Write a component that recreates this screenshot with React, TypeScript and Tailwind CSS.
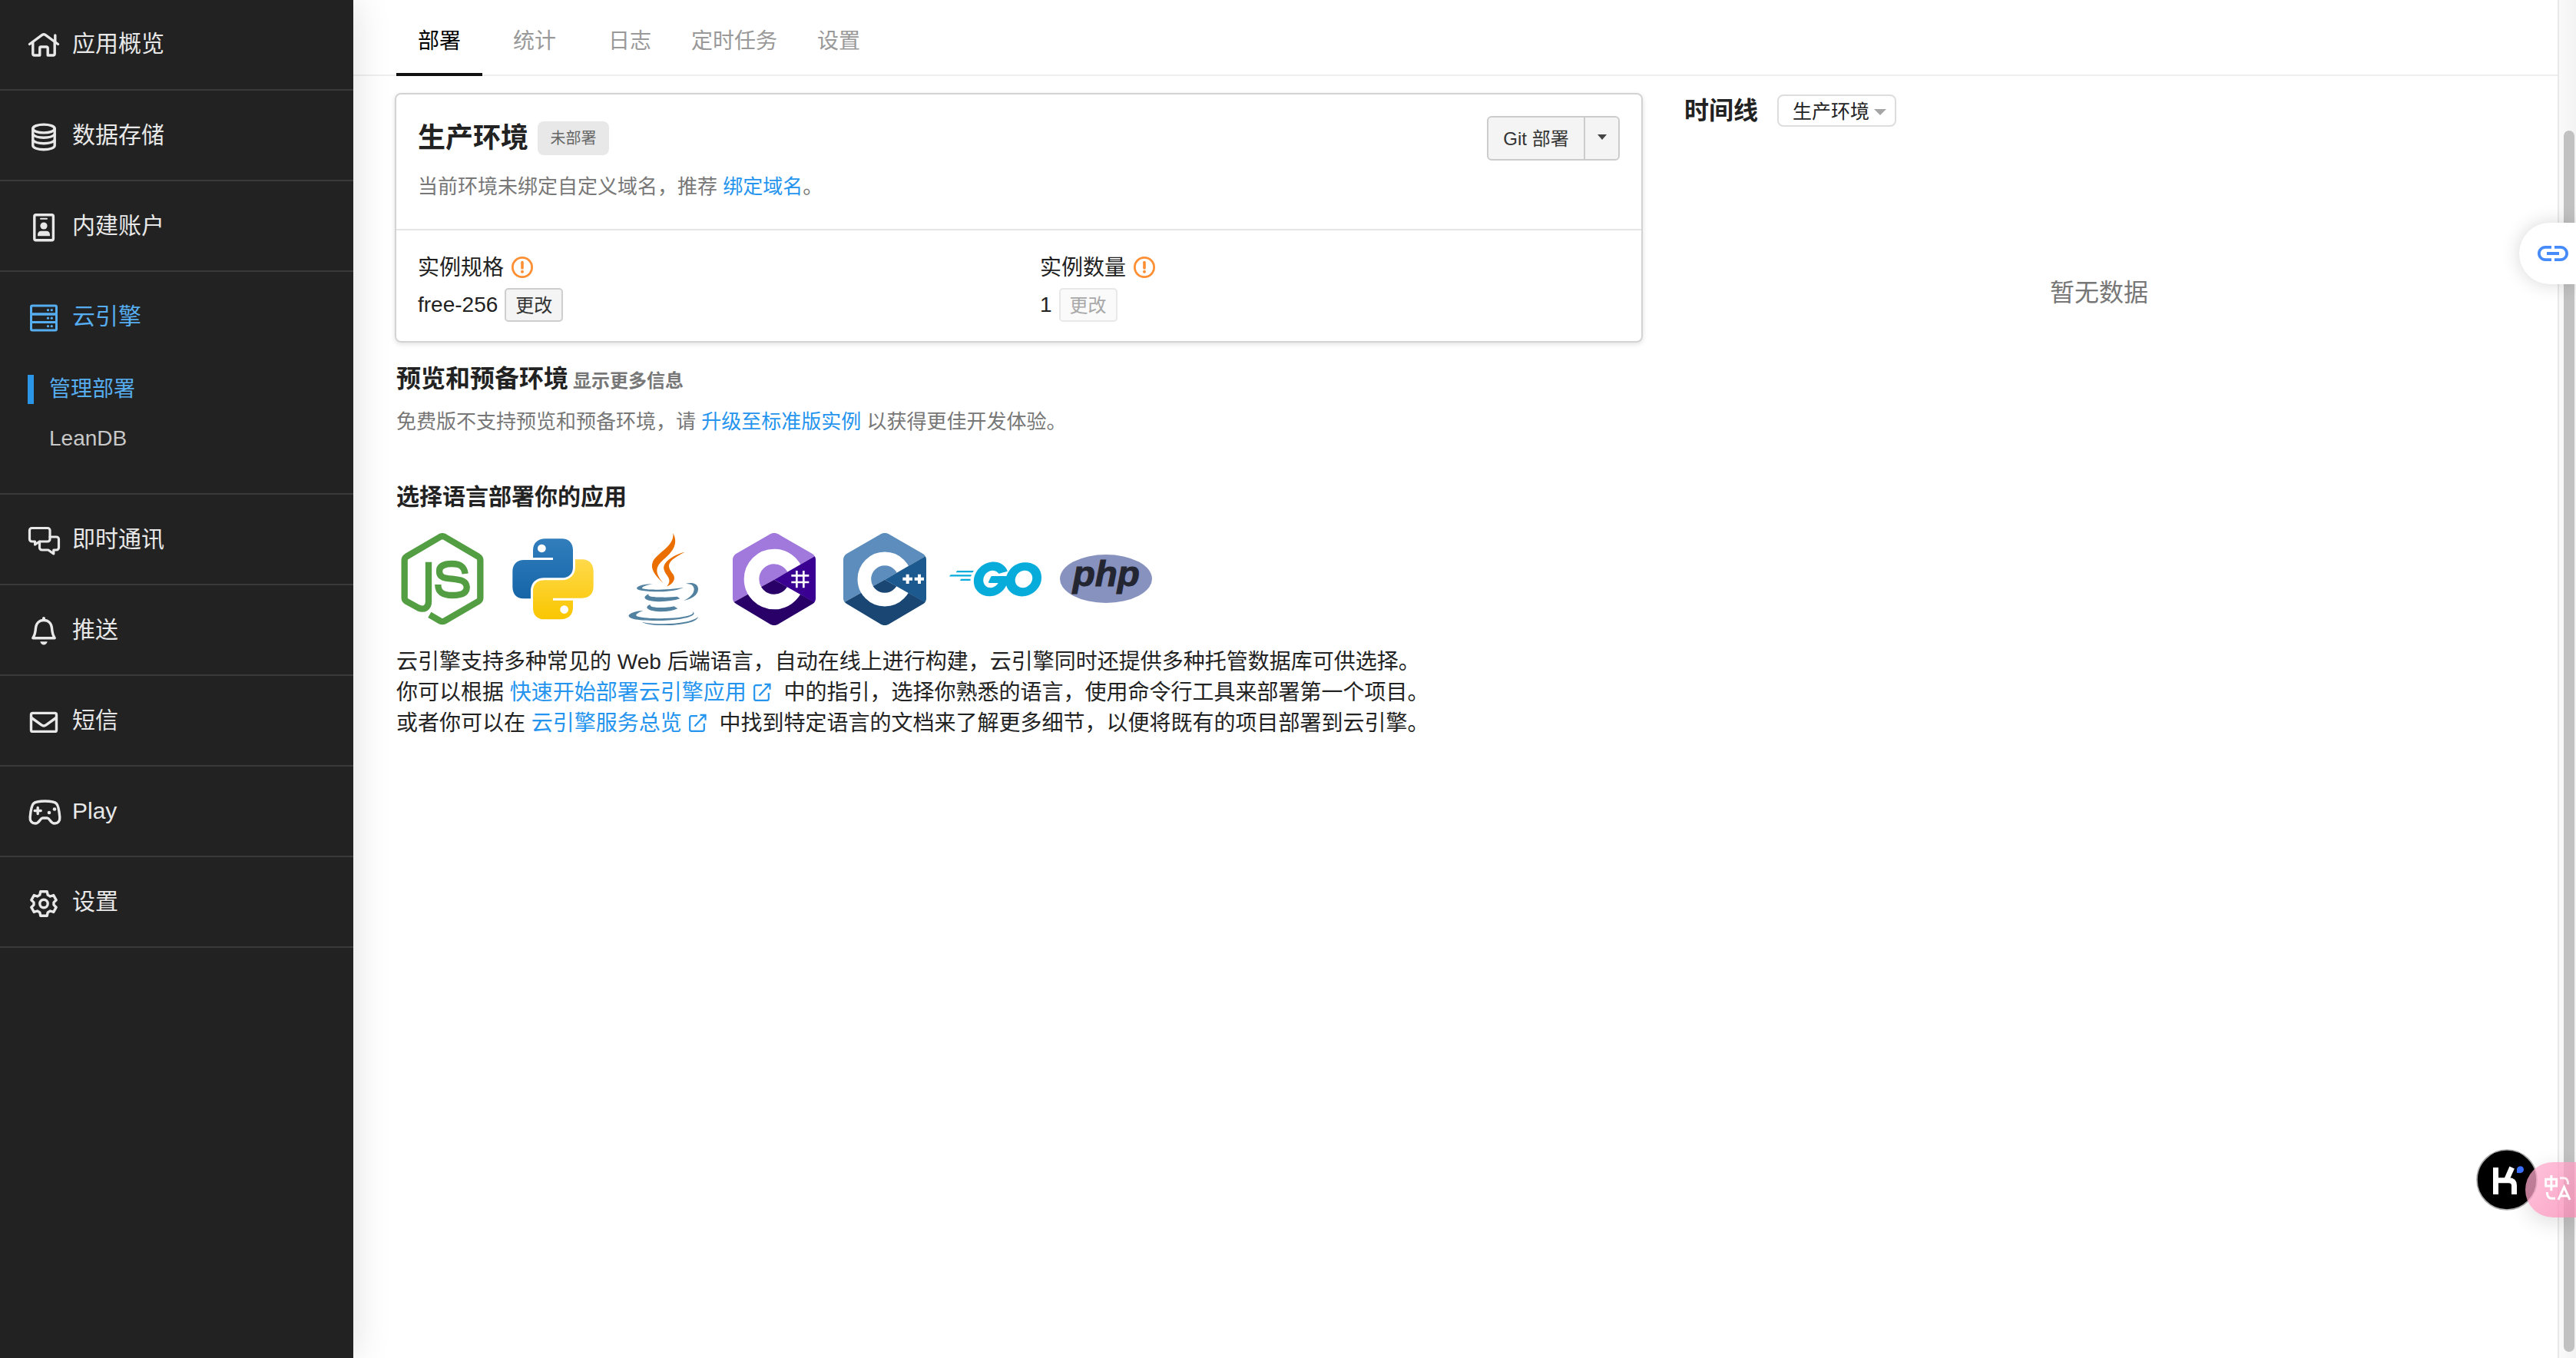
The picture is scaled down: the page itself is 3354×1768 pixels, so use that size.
import type { ReactNode } from 'react';
import { MdLink } from 'react-icons/md';
import { SiGo } from 'react-icons/si';

const stroke = {
  fill: 'none',
  stroke: 'currentColor',
  strokeWidth: 3.4,
  strokeLinecap: 'round' as const,
  strokeLinejoin: 'round' as const,
};

function NavIcon({ children }: { children: ReactNode }) {
  return (
    <svg viewBox="0 0 48 40" className="h-10 w-12 shrink-0">
      {children}
    </svg>
  );
}

const HomeIcon = () => (
  <NavIcon>
    <g {...stroke}>
      <path d="M5.5 18.5 22 6.4a3.4 3.4 0 0 1 4 0L42.5 18.5" />
      <path d="M38.8 7v8" />
      <path d="M9.8 16v15a2 2 0 0 0 2 2h7v-9.5a1.5 1.5 0 0 1 1.5-1.5h7.400a1.5 1.5 0 0 1 1.5 1.5V33h7a2 2 0 0 0 2-2V16" />
    </g>
  </NavIcon>
);

const DatabaseIcon = () => (
  <NavIcon>
    <g {...stroke}>
      <ellipse cx="24" cy="9.5" rx="14.2" ry="5.4" />
      <path d="M9.8 9.5v22c0 3 6.4 5.2 14.2 5.2s14.2-2.2 14.2-5.200v-22" />
      <path d="M9.8 17c2.5 3 8 4.2 14.2 4.2S35.7 20 38.2 17M9.8 24.5c2.5 3 8 4.2 14.2 4.2s11.7-1.2 14.2-4.200" />
    </g>
  </NavIcon>
);

const AccountIcon = () => (
  <NavIcon>
    <rect x="11.8" y="3.7" width="24.6" height="33" rx="2" {...stroke} />
    <path d="M20 8.7h8" {...stroke} strokeWidth={2} />
    <circle cx="24" cy="18" r="4.6" fill="currentColor" />
    <path d="M16 31.2v-1.400c0-3.2 2-5 4.5-5h7c2.500 0 4.5 1.8 4.5 5v1.400z" fill="currentColor" />
  </NavIcon>
);

const ServerIcon = () => (
  <NavIcon>
    <g {...stroke} strokeWidth={3}>
      <rect x="7.5" y="4" width="33" height="11" rx="1.5" />
      <rect x="7.5" y="15" width="33" height="10.5" rx="1.5" />
      <rect x="7.5" y="25.5" width="33" height="10.5" rx="1.5" />
    </g>
    <g fill="currentColor">
      <circle cx="29.5" cy="9.7" r="1.6" />
      <circle cx="34.3" cy="9.7" r="1.6" />
      <circle cx="29.5" cy="20.2" r="1.6" />
      <circle cx="34.3" cy="20.2" r="1.6" />
      <circle cx="29.5" cy="30.7" r="1.6" />
      <circle cx="34.3" cy="30.7" r="1.6" />
    </g>
  </NavIcon>
);

const ChatIcon = () => (
  <NavIcon>
    <g {...stroke} strokeWidth={3.2}>
      <path d="M18.5 21 12.6 25v-4H8.5a3 3 0 0 1-3-3V6.500a3 3 0 0 1 3-3H29a3 3 0 0 1 3 3V18a3 3 0 0 1-3 3z" />
      <path d="M32 15h8.5a3 3 0 0 1 3 3v11a3 3 0 0 1-3 3h-3.700v5l-7-5H21.500a3 3 0 0 1-3-3v-8" />
    </g>
  </NavIcon>
);

const BellIcon = () => (
  <NavIcon>
    <path d="M24 5.5c-6.2 0-10 4.2-10.5 10.2C13 22.5 12 25.5 9.8 28.7h28.4C36 25.5 35 22.5 34.5 15.7 34 9.7 30.2 5.5 24 5.5z" {...stroke} />
    <path d="M24 3v2" {...stroke} strokeWidth={4} />
    <path d="M19.3 33.2h9.400c-.6 2.7-2.3 4.2-4.700 4.2s-4.1-1.5-4.700-4.200z" fill="currentColor" />
  </NavIcon>
);

const MailIcon = () => (
  <NavIcon>
    <rect x="7.5" y="8.4" width="33" height="24" rx="2" {...stroke} />
    <path d="m8 14.5 12.7 9.2a5.6 5.6 0 0 0 6.6 0L40 14.5" {...stroke} />
  </NavIcon>
);

const PlayIcon = () => (
  <NavIcon>
    <g {...stroke}>
      <path d="M10.5 8.2C13 5.6 20 5 25.5 5s12.5.6 15 3.200c2 2 3.6 9.8 4.3 17.600.5 5-2.500 8.2-6.800 8.200-5.500 0-6-7-9.500-7h-6c-3.500 0-4 7-9.500 7-4.300 0-7.300-3.200-6.800-8.200C6.9 18 8.5 10.2 10.5 8.2z" />
      <path d="M16.2 13.5v8M12.2 17.5h8" />
    </g>
    <circle cx="31" cy="20" r="2.3" fill="currentColor" />
    <circle cx="38" cy="15.5" r="2.3" fill="currentColor" />
  </NavIcon>
);

const GearIcon = () => (
  <NavIcon>
    <g {...stroke}>
      <path d="M19.8 4.7h8.4l1 4.4 3.2 1.9 4.3-1.4 3.5 6.2-3.2 3.1v3.2l3.2 3.1-3.5 6.2-4.3-1.400-3.2 1.9-1 4.4h-8.400l-1-4.400-3.200-1.900-4.300 1.400-3.500-6.200 3.200-3.100v-3.200l-3.200-3.100 3.500-6.200 4.300 1.400 3.200-1.900z" />
      <circle cx="24" cy="20.5" r="5.2" />
    </g>
  </NavIcon>
);

function NavItem({ icon, label, active, first }: { icon: ReactNode; label: string; active?: boolean; first?: boolean }) {
  return (
    <div
      className={`flex h-[116px] items-center gap-[13px] pl-[33px] text-[30px] ${first ? 'pb-[3px]' : ''} ${active ? 'text-[#56adf0]' : 'text-[#e8e8e8]'}`}
    >
      <span className="pt-1">{icon}</span>
      <span className="leading-[44px]">{label}</span>
    </div>
  );
}

const Divider = () => <div className="h-0.5 bg-[#3a3a3a]" />;

function Sidebar() {
  return (
    <aside className="relative z-10 flex w-[460px] shrink-0 flex-col bg-[#222222] shadow-[0_0_48px_rgba(0,0,0,0.13)]">
      <NavItem first icon={<HomeIcon />} label="应用概览" />
      <Divider />
      <NavItem icon={<DatabaseIcon />} label="数据存储" />
      <Divider />
      <NavItem icon={<AccountIcon />} label="内建账户" />
      <Divider />
      <div className="h-[288px]">
        <NavItem active icon={<ServerIcon />} label="云引擎" />
        <div className="flex h-[73px] items-center pl-9 text-[28px] text-[#56adf0]">
          <span className="mr-5 h-[38px] w-2 bg-[#2b96e8]" />
          管理部署
        </div>
        <div className="flex h-14 items-center pl-16 text-[28px] text-[#c8c8c8]">LeanDB</div>
      </div>
      <Divider />
      <NavItem icon={<ChatIcon />} label="即时通讯" />
      <Divider />
      <NavItem icon={<BellIcon />} label="推送" />
      <Divider />
      <NavItem icon={<MailIcon />} label="短信" />
      <Divider />
      <NavItem icon={<PlayIcon />} label="Play" />
      <Divider />
      <NavItem icon={<GearIcon />} label="设置" />
      <Divider />
    </aside>
  );
}

function Tabs() {
  return (
    <nav className="flex h-[99px] items-stretch border-b-2 border-[#eeeeee] pl-14 text-[28px] text-[#999999]">
      <div className="-mb-0.5 flex items-center border-b-4 border-[#111111] px-7 pt-[13px] text-black">部署</div>
      <div className="ml-10 flex items-center pt-[11px]">统计</div>
      <div className="ml-[68px] flex items-center pt-[11px]">日志</div>
      <div className="ml-[52px] flex items-center pt-[11px]">定时任务</div>
      <div className="ml-[52px] flex items-center pt-[11px]">设置</div>
    </nav>
  );
}

const WarnIcon = () => (
  <svg viewBox="0 0 28 28" className="h-7 w-7">
    <circle cx="14" cy="14" r="12.6" fill="none" stroke="#ff8f34" strokeWidth="2.8" />
    <path d="M14 7.5v7.5" stroke="#ff8f34" strokeWidth="3.6" strokeLinecap="round" />
    <circle cx="14" cy="19.8" r="2" fill="#ff8f34" />
  </svg>
);

function Spec({ title, value, disabled }: { title: string; value: string; disabled?: boolean }) {
  return (
    <div className="flex w-[810px] shrink-0 flex-col">
      <div className="flex h-11 items-center gap-2.5">
        <span className="pt-0.5">{title}</span>
        <WarnIcon />
      </div>
      <div className="mt-[5px] flex h-11 items-center gap-[9px]">
        <span>{value}</span>
        <button
          className={`h-11 rounded-[5px] border-2 px-3 pt-px text-2xl leading-[38px] ${disabled ? 'border-[#e8e8e8] bg-[#fafafa] text-[#a8a8a8]' : 'border-[#cecece] bg-[#f4f4f4] text-[#333333]'}`}
        >
          更改
        </button>
      </div>
    </div>
  );
}

function EnvironmentCard() {
  return (
    <section className="h-[325px] rounded-lg border-2 border-[#d3d3d3] shadow-[0_2px_6px_rgba(0,0,0,0.12)]">
      <div className="flex h-[177px] items-start justify-between border-b-2 border-[#e6e6e6] px-7 pt-7">
        <div>
          <div className="mt-[7px] flex h-11 items-center gap-3">
            <h1 className="text-[36px] font-bold leading-[44px]">生产环境</h1>
            <span className="h-11 w-[93px] rounded-lg bg-[#e8e8e8] text-center text-[20px] leading-[44px] text-[#666666]">未部署</span>
          </div>
          <p className="mt-[19px] text-[26px] leading-[44px] text-[#777777]">
            当前环境未绑定自定义域名，推荐 <a className="text-[#2494ee]">绑定域名</a>。
          </p>
        </div>
        <div className="flex h-[58px] rounded-[6px] border-2 border-[#cccccc] bg-[#f4f4f4] text-2xl text-[#333333]">
          <div className="flex w-[124px] items-center justify-center pt-0.5">Git 部署</div>
          <div className="flex w-[45px] items-center justify-center border-l-2 border-[#cccccc]">
            <svg viewBox="0 0 12 7" className="mb-1 h-[7px] w-3">
              <path d="M0 0h12L6 7z" fill="#444444" />
            </svg>
          </div>
        </div>
      </div>
      <div className="flex pl-7 pt-[26px] text-[28px]">
        <Spec title="实例规格" value="free-256" />
        <Spec title="实例数量" value="1" disabled />
      </div>
    </section>
  );
}

const NodeLogo = () => (
  <svg viewBox="48 72 360 360" className="size-[120px]">
    <g fill="none" stroke="#539e43" strokeWidth="25">
      <path d="M174 185V340C174 364 156 374 134 364L88 339Q80 334 80 325V178Q80 169 88 164L219 87Q228 82 237 87L368 164Q376 169 376 178V325Q376 334 368 339L237 415Q228 420 219 415L178 391" />
      <path d="M317 231C313 201 296 192 266 192C234 192 216 200 216 221C216 246 236 248 266 251C304 255 323 260 323 284C323 308 300 315 267 315C230 315 211 304 211 273" />
    </g>
  </svg>
);

const pythonHalf =
  'M582 168V140C582 110 602 94 630 94H694C722 94 738 112 738 138V206C738 232 720 247 694 247H625C594 247 573 268 573 298V328H545C518 328 502 310 502 282V222C502 194 520 177 546 177H660V168ZM616 116a16 16 0 1 0 .1 0z';

const PythonLogo = () => (
  <svg viewBox="480 72 360 360" className="size-[120px]">
    <defs>
      <linearGradient id="pyBlue" x1="0" y1="0" x2="0" y2="1">
        <stop offset="0" stopColor="#327ebd" />
        <stop offset="1" stopColor="#1565a7" />
      </linearGradient>
      <linearGradient id="pyYellow" x1="0" y1="1" x2="0" y2="0">
        <stop offset="0" stopColor="#ffda4b" />
        <stop offset="1" stopColor="#f9c600" />
      </linearGradient>
    </defs>
    <path d={pythonHalf} fill="url(#pyBlue)" fillRule="evenodd" />
    <path d={pythonHalf} fill="url(#pyYellow)" fillRule="evenodd" transform="rotate(180 660 251.5)" />
  </svg>
);

const JavaLogo = () => (
  <svg viewBox="912 72 360 360" className="size-[120px]">
    <g fill="#ea6f00">
      <path d="M1129 72C1150 112 1130 142 1096 172C1066 198 1050 220 1091 268C1060 240 1038 212 1050 184C1064 150 1136 124 1129 72Z" />
      <path d="M1175 146C1130 170 1108 184 1114 208C1119 226 1134 232 1134 248C1133 262 1122 272 1105 281C1118 264 1117 254 1106 238C1094 220 1086 206 1100 188C1114 170 1142 154 1175 146Z" />
    </g>
    <g fill="#5382a1">
      <path d="M1050 270C1020 276 1002 284 1010 289C1030 296 1120 294 1170 284C1150 294 1120 300 1076 301C1020 301 986 296 987 287C988 278 1020 271 1050 270Z" />
      <path d="M1178 270C1204 262 1228 270 1227 292C1226 314 1204 330 1170 336C1196 324 1211 308 1211 291C1210 274 1196 270 1178 270Z" />
      <path d="M1034 310C1026 322 1060 323 1096 323C1118 322 1134 321 1145 320L1156 328C1130 337 1096 341 1060 339C1020 336 1004 324 1034 310Z" />
      <path d="M1040 351C1036 362 1066 364 1096 363C1114 362 1126 360 1132 358L1147 367C1126 376 1096 381 1066 378C1026 374 1016 360 1040 351Z" />
      <path d="M1012 376C988 384 976 394 992 398C1020 406 1096 408 1150 402C1190 398 1214 388 1206 379C1222 390 1196 402 1160 407C1100 417 1010 415 976 408C948 401 950 390 974 382C988 377 1000 376 1012 376Z" />
      <path d="M1008 420C1070 432 1190 430 1227 400C1222 420 1170 431 1100 433C1060 433 1020 428 1008 420Z" />
    </g>
  </svg>
);

function HexC({ id, light, dark, side, r, w, children }: { id: string; light: string; dark: string; side: string; r: number; w: number; children: ReactNode }) {
  return (
    <svg viewBox="276 72 360 360" className="size-[120px]">
      <clipPath id={id}>
        <path d="M442 75Q456 68 470 75L604 152Q618 161 618 175V328Q618 342 606 349L470 429Q456 436 442 429L308 349Q294 341 294 328V175Q294 161 308 152Z" />
      </clipPath>
      <g clipPath={`url(#${id})`}>
        <path d="M276 72H636V150L456 254 276 354Z" fill={light} />
        <path d="M276 354 456 254 636 354V440H276Z" fill={dark} />
        <circle cx="456" cy="252" r={r} fill="none" stroke="#ffffff" strokeWidth={w} />
        <path d="M456 254 636 150V356Z" fill={side} />
      </g>
      {children}
    </svg>
  );
}

const CSharpLogo = () => (
  <HexC id="csHex" light="#a179dc" dark="#280068" side="#390091" r={88.5} w={59}>
    <path d="M544 219V286M571 219V286M523 238H592M523 264H592" stroke="#ffffff" strokeWidth="8" />
  </HexC>
);

const CppLogo = () => (
  <HexC id="cppHex" light="#5c8dbc" dark="#1a4674" side="#1b598e" r={80} w={53}>
    <path d="M545 233V270M526 251.5H564M591 233V270M572 251.5H609" stroke="#ffffff" strokeWidth="12" />
  </HexC>
);

const PhpLogo = () => (
  <svg viewBox="1140 72 360 360" className="size-[120px]">
    <ellipse cx="1320" cy="250.5" rx="180" ry="94.5" fill="#8892bf" />
    <text
      x="1190"
      y="279"
      fontFamily="Liberation Sans"
      fontWeight="700"
      fontStyle="italic"
      fontSize="136"
      textLength="262"
      lengthAdjust="spacingAndGlyphs"
      fill="#232531"
      stroke="#232531"
      strokeWidth="3"
    >
      php
    </text>
  </svg>
);

const ExternalIcon = () => (
  <svg viewBox="0 0 24 24" className="ml-2 mr-[9px] inline-block size-6 align-[-2px]" fill="none" stroke="currentColor" strokeWidth="2.2">
    <path d="M12 3.2H4.200a2 2 0 0 0-2 2v15.600a2 2 0 0 0 2 2h14.600a2 2 0 0 0 2-2V13" />
    <path d="M8.500 16.500 21.500 2.500M15.500 1.800h7v7" />
  </svg>
);

function FloatingTools() {
  return (
    <>
      <div className="absolute right-0 top-[290px] z-20 flex h-20 w-[74px] items-center rounded-l-full bg-white pl-5 text-[#468bf9] shadow-[0_0_24px_rgba(0,0,0,0.16)]">
        <MdLink className="size-12 shrink-0" />
      </div>
      <svg viewBox="72 108 240 240" className="absolute left-[3224px] top-[1496px] z-20 size-20">
        <circle cx="192" cy="228" r="117" fill="#000000" stroke="#a8a8a8" strokeWidth="5" />
        <g fill="none" stroke="#ffffff" strokeWidth="21">
          <path d="M148.500 180V285" />
          <path d="M150 230.500H198Q220 230 220.500 250V285" />
          <path d="M212 180 190 230" />
        </g>
        <path d="M231 201V189a13.500 13.500 0 1 1 13.500 12.500z" fill="#3a70ff" />
      </svg>
      <div className="absolute right-0 top-[1513px] z-20 h-[72px] w-[66px] rounded-l-full bg-linear-to-br from-[#ffb0d0]/75 to-[#f888b2]/75 shadow-[0_8px_28px_rgba(0,0,0,0.12)]">
        <svg viewBox="264 159 198 216" className="h-[72px] w-[66px]" fill="none" stroke="#ffffff" strokeWidth="9">
          <path d="M344 226H386V252H344ZM365.500 210V271" />
          <path d="M399 221H416Q431 222 431 246" opacity="0.8" />
          <path d="M349 276Q349 301 368 301H381" />
          <path d="M393 306 415.500 256 438 306M400 291H431" />
        </svg>
      </div>
    </>
  );
}

export default function App() {
  return (
    <div className="relative flex h-[1768px] w-[3354px] overflow-hidden bg-white font-['Liberation_Sans','Noto_Sans_CJK_SC',sans-serif] text-[#222222]">
      <Sidebar />
      <main className="flex flex-1 flex-col">
        <Tabs />
        <div className="flex pl-[54px] pt-[22px]">
          <div className="w-[1625px]">
            <EnvironmentCard />
            <div className="pl-0.5">
              <div className="mt-[25px] flex h-11 items-baseline text-[32px] font-bold leading-[44px]">
                预览和预备环境
                <span className="ml-1.5 text-2xl text-[#777777]">显示更多信息</span>
              </div>
              <p className="mt-3 text-[26px] leading-[44px] text-[#777777]">
                免费版不支持预览和预备环境，请 <a className="text-[#2494ee]">升级至标准版实例</a> 以获得更佳开发体验。
              </p>
              <h2 className="mt-[54px] text-[30px] font-bold leading-[44px]">选择语言部署你的应用</h2>
              <div className="mt-[25px] flex h-[120px] gap-6">
                <NodeLogo />
                <PythonLogo />
                <JavaLogo />
                <CSharpLogo />
                <CppLogo />
                <SiGo className="size-[120px] text-[#08acdb]" />
                <PhpLogo />
              </div>
              <div className="mt-7 text-[28px] leading-[40px]">
                <p>云引擎支持多种常见的 Web 后端语言，自动在线上进行构建，云引擎同时还提供多种托管数据库可供选择。</p>
                <p>
                  你可以根据{' '}
                  <a className="text-[#2494ee]">
                    快速开始部署云引擎应用
                    <ExternalIcon />
                  </a>{' '}
                  中的指引，选择你熟悉的语言，使用命令行工具来部署第一个项目。
                </p>
                <p>
                  或者你可以在{' '}
                  <a className="text-[#2494ee]">
                    云引擎服务总览
                    <ExternalIcon />
                  </a>{' '}
                  中找到特定语言的文档来了解更多细节，以便将既有的项目部署到云引擎。
                </p>
              </div>
            </div>
          </div>
          <div className="ml-[54px] flex flex-1 flex-col">
            <div className="mt-0.5 flex h-[42px] items-center">
              <h2 className="text-[32px] font-bold leading-[42px]">时间线</h2>
              <div className="ml-[25px] flex h-[42px] w-[155px] items-center gap-1.5 rounded-lg border-2 border-[#dddddd] pl-[18px] text-[25px] leading-[38px]">
                <span className="pt-0.5">生产环境</span>
                <svg viewBox="0 0 16 8" className="mt-1 h-2 w-4">
                  <path d="M0 0h16L8 8z" fill="#a6a6a6" />
                </svg>
              </div>
            </div>
            <div className="mt-[194px] pl-[476px] text-[32px] leading-[44px] text-[#777777]">暂无数据</div>
          </div>
        </div>
      </main>
      <div className="flex w-6 shrink-0 justify-end border-l-2 border-[#e8e8e8] bg-linear-to-r from-[#fafafa] to-[#f3f3f3] pr-0.5 pt-[170px]">
        <div className="h-[1590px] w-3.5 rounded-full bg-[#c1c1c1]" />
      </div>
      <FloatingTools />
    </div>
  );
}
